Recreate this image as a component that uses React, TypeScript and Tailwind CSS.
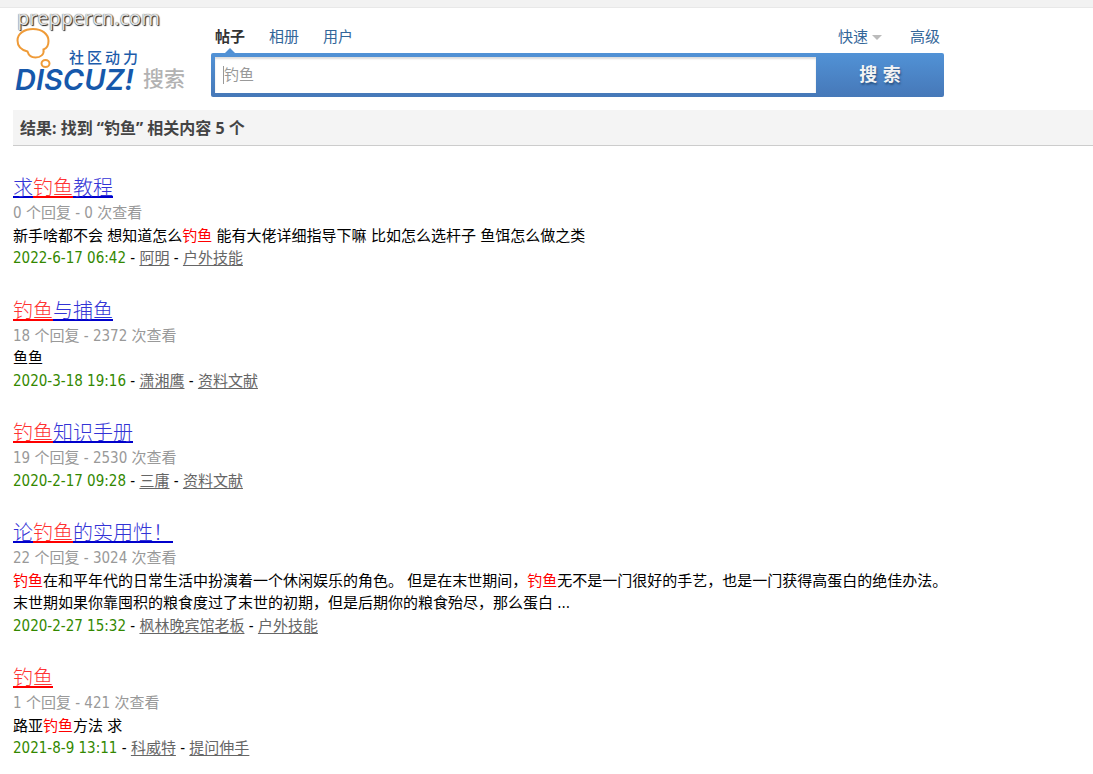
import React from 'react';

type Result = {
  title: string;
  replies: number;
  views: number;
  content?: string;
  date: string;
  author: string;
  forum: string;
};

const keyword = '钓鱼';

const results: Result[] = [
  {
    title: '求钓鱼教程',
    replies: 0,
    views: 0,
    content: '新手啥都不会 想知道怎么钓鱼 能有大佬详细指导下嘛 比如怎么选杆子 鱼饵怎么做之类',
    date: '2022-6-17 06:42',
    author: '阿明',
    forum: '户外技能',
  },
  {
    title: '钓鱼与捕鱼',
    replies: 18,
    views: 2372,
    content: '鱼鱼',
    date: '2020-3-18 19:16',
    author: '潇湘鹰',
    forum: '资料文献',
  },
  {
    title: '钓鱼知识手册',
    replies: 19,
    views: 2530,
    date: '2020-2-17 09:28',
    author: '三庸',
    forum: '资料文献',
  },
  {
    title: '论钓鱼的实用性！',
    replies: 22,
    views: 3024,
    content:
      '钓鱼在和平年代的日常生活中扮演着一个休闲娱乐的角色。 但是在末世期间，钓鱼无不是一门很好的手艺，也是一门获得高蛋白的绝佳办法。 末世期如果你靠囤积的粮食度过了末世的初期，但是后期你的粮食殆尽，那么蛋白 ...',
    date: '2020-2-27 15:32',
    author: '枫林晚宾馆老板',
    forum: '户外技能',
  },
  {
    title: '钓鱼',
    replies: 1,
    views: 421,
    content: '路亚钓鱼方法 求',
    date: '2021-8-9 13:11',
    author: '科威特',
    forum: '提问伸手',
  },
];

// Wraps every occurrence of the keyword in red
const Highlight: React.FC<{ text: string }> = ({ text }) => (
  <>
    {text.split(keyword).map((part, i) => (
      <React.Fragment key={i}>
        {i > 0 && (
          <span className="text-[#ff0000] decoration-[#ff0000] [a_&]:text-[#ff3333] [a_&]:underline [a_&]:decoration-2">{keyword}</span>
        )}
        {part}
      </React.Fragment>
    ))}
  </>
);

const Logo: React.FC = () => (
  <svg viewBox="0 0 176 68" className="block h-[68px] w-[176px] overflow-visible" role="img" aria-label="Discuz! 搜索">
    <g fill="none" stroke="#ef9b38" strokeWidth="2">
      <path d="M14.500 23.500C8.500 22 4.500 18 4.500 12.500C4.500 5.500 11.500 1 20 1C29 1 35.500 6 35.500 13C35.500 17 33.500 20.500 30.500 21.500C31.500 26.500 27.500 29.500 22.500 29.500C18.500 29.500 15.500 27 14.500 23.500Z" />
      <ellipse cx="32.500" cy="35.500" rx="4" ry="3.500" />
    </g>
    <text x="56" y="35" fontSize="15" letterSpacing="3" fill="#1d5cab" className="font-medium">社区动力</text>
    <text x="2" y="62" fontSize="29" fill="#1658ab" className="font-[Inter] font-semibold italic">DISCUZ!</text>
    <text x="130" y="58" fontSize="21" fill="#b2b2b2" className="font-medium">搜索</text>
  </svg>
);

const SearchForm: React.FC = () => (
  <form className="w-[733px]" onSubmit={(e) => e.preventDefault()}>
    <div className="flex h-8 items-center justify-between px-1 text-[#336699]">
      <nav className="flex gap-6">
        <a href="#threads" className="relative font-bold text-[#333333]">
          帖子
          <span className="absolute top-[22px] left-[10px] border-x-5 border-b-5 border-x-transparent border-b-[#5090d4]" />
        </a>
        <a href="#albums">相册</a>
        <a href="#users">用户</a>
      </nav>
      <nav className="flex gap-7">
        <a href="#quick" className="flex items-center gap-1">
          快速
          <span className="border-x-5 border-t-5 border-x-transparent border-t-[#bbbbbb]" />
        </a>
        <a href="#advanced">高级</a>
      </nav>
    </div>
    <div className="flex h-[44px] rounded-xs bg-linear-to-b from-[#5192d6] to-[#4678b8] py-1 pl-1">
      <div className="flex min-w-0 flex-1 items-center bg-white pl-2 shadow-[inset_0_2px_2px_#dddddd]">
        <span className="h-[18px] w-px bg-[#999999]" />
        <input type="text" aria-label="搜索" defaultValue={keyword} className="min-w-0 flex-1 text-[#999999] outline-none" />
      </div>
      <button type="submit" className="w-[128px] text-lg font-bold text-[#f4f4f4] [text-shadow:1px_2px_2px_#2c5486]">
        搜 索
      </button>
    </div>
  </form>
);

const ResultItem: React.FC<{ result: Result }> = ({ result }) => (
  <li className="mb-[27px]">
    <h3 className="text-xl leading-7 font-light">
      <a href="#thread" className="text-[#3333d6] underline decoration-[#0000cc] decoration-2 underline-offset-1">
        <Highlight text={result.title} />
      </a>
    </h3>
    <p className="text-[#999999]">
      {result.replies} 个回复 - {result.views} 次查看
    </p>
    {result.content && (
      <p>
        <Highlight text={result.content} />
      </p>
    )}
    <p>
      <span className="text-[#338800]">{result.date}</span>
      {' - '}
      <a href="#author" className="text-[#666666] underline underline-offset-2">{result.author}</a>
      {' - '}
      <a href="#forum" className="text-[#666666] underline underline-offset-2">{result.forum}</a>
    </p>
  </li>
);

const App: React.FC = () => {
  return (
    <div className="bg-white font-['DejaVu_Sans_Condensed','Noto_Sans_CJK_SC',sans-serif] text-[15px] leading-normal text-black" lang="zh-CN">
      <div className="h-2 border-b border-[#e8e8e8] bg-[#f2f2f2]" />

      <div className="pl-[13px]">
        <header className="flex gap-[22px] pb-[13px]">
          <div className="w-[176px] shrink-0">
            <div className="h-5 pl-1 font-['Noto_Sans'] text-xl leading-5 text-[#e0e0e0] [text-shadow:1px_1px_1px_#222222,0_0_1px_#444444]">preppercn.com</div>
            <Logo />
          </div>
          <div className="pt-[13px]">
            <SearchForm />
          </div>
        </header>

        <h2 className="flex h-9 items-center border-b border-[#cccccc] bg-[#f4f4f4] pl-[7px] font-['Noto_Sans','Noto_Sans_CJK_SC',sans-serif] text-base font-bold text-[#444444]">
          结果: 找到 “{keyword}” 相关内容 5 个
        </h2>

        <ul className="max-w-[940px] pt-7">
          {results.map((result) => (
            <ResultItem key={result.date} result={result} />
          ))}
        </ul>
      </div>
    </div>
  );
};

export default App;
